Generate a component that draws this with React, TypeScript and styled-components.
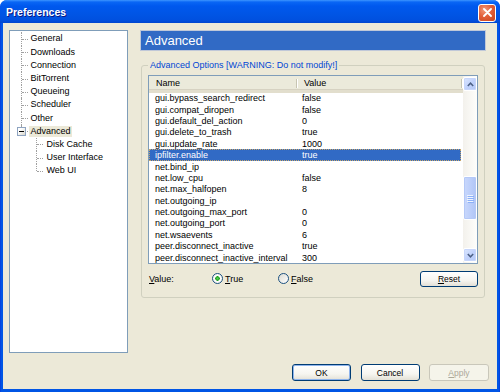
import React from 'react'
import styled, { createGlobalStyle } from 'styled-components'

const Global = createGlobalStyle`
    html, body {
        margin: 0;
        padding: 0;
        background: #fff;
    }
    body {
        font-family: "Liberation Sans", Arial, sans-serif;
        font-size: 9px;
    }
`

const treeItems = [
    { label: 'General', level: 0 },
    { label: 'Downloads', level: 0 },
    { label: 'Connection', level: 0 },
    { label: 'BitTorrent', level: 0 },
    { label: 'Queueing', level: 0 },
    { label: 'Scheduler', level: 0 },
    { label: 'Other', level: 0 },
    { label: 'Advanced', level: 0, open: true, selected: true, last: true },
    { label: 'Disk Cache', level: 1 },
    { label: 'User Interface', level: 1 },
    { label: 'Web UI', level: 1, last: true },
]

const settings = [
    ['gui.bypass_search_redirect', 'false'],
    ['gui.compat_diropen', 'false'],
    ['gui.default_del_action', '0'],
    ['gui.delete_to_trash', 'true'],
    ['gui.update_rate', '1000'],
    ['ipfilter.enable', 'true'],
    ['net.bind_ip', ''],
    ['net.low_cpu', 'false'],
    ['net.max_halfopen', '8'],
    ['net.outgoing_ip', ''],
    ['net.outgoing_max_port', '0'],
    ['net.outgoing_port', '0'],
    ['net.wsaevents', '6'],
    ['peer.disconnect_inactive', 'true'],
    ['peer.disconnect_inactive_interval', '300'],
]

const App = () => {
  return (
    <>
    <Global />
    <Window>
        <TitleBar>
            <Title>Preferences</Title>
            <CloseBtn>
                <svg width="9" height="9" viewBox="0 0 9 9">
                    <path d="M1 1 L8 8 M8 1 L1 8" stroke="#fff" strokeWidth="1.8" strokeLinecap="round" />
                </svg>
            </CloseBtn>
        </TitleBar>
        <Body>
            <Main>
                <Tree>
                    {treeItems.map((t) => (
                        <TreeRow key={t.label} $level={t.level} $last={!!t.last}>
                            {t.open && <Expander><Minus /></Expander>}
                            <TreeLabel $selected={!!t.selected}>{t.label}</TreeLabel>
                        </TreeRow>
                    ))}
                </Tree>
                <Right>
                    <PageHeader>Advanced</PageHeader>
                    <Group>
                        <Legend>Advanced Options [WARNING: Do not modify!]</Legend>
                        <List>
                            <ListBody>
                                <HeadRow>
                                    <HeadCell $w={148}>Name</HeadCell>
                                    <HeadCell $w={165}>Value</HeadCell>
                                </HeadRow>
                                {settings.map(([k, v]) => (
                                    <Row key={k} $selected={k === 'ipfilter.enable'}>
                                        <NameCell>{k}</NameCell>
                                        <ValueCell>{v}</ValueCell>
                                    </Row>
                                ))}
                            </ListBody>
                            <ScrollBar>
                                <ArrowBtn>
                                    <svg width="7" height="5" viewBox="0 0 7 5">
                                        <path d="M0.8 4 L3.5 1.2 L6.2 4" stroke="#4D6185" strokeWidth="1.5" fill="none" />
                                    </svg>
                                </ArrowBtn>
                                <Track>
                                    <Thumb>
                                        <Grip />
                                        <Grip />
                                        <Grip />
                                        <Grip />
                                    </Thumb>
                                </Track>
                                <ArrowBtn>
                                    <svg width="7" height="5" viewBox="0 0 7 5">
                                        <path d="M0.8 1 L3.5 3.8 L6.2 1" stroke="#4D6185" strokeWidth="1.5" fill="none" />
                                    </svg>
                                </ArrowBtn>
                            </ScrollBar>
                        </List>
                        <ValueBar>
                            <ValueLabel><u>V</u>alue:</ValueLabel>
                            <RadioOpt $w={66}><Radio $checked /><span><u>T</u>rue</span></RadioOpt>
                            <RadioOpt $w={60}><Radio /><span><u>F</u>alse</span></RadioOpt>
                            <Button $w={58} $h={16}><u>R</u>eset</Button>
                        </ValueBar>
                    </Group>
                </Right>
            </Main>
            <Footer>
                <Button $w={59} $h={17} $default>OK</Button>
                <Button $w={59} $h={17}>Cancel</Button>
                <Button $w={60} $h={17} $disabled><u>A</u>pply</Button>
            </Footer>
        </Body>
    </Window>
    </>
  )
}

export default App

const Window = styled.div`
    width: 500px;
    height: 392px;
    display: flex;
    flex-direction: column;
    background: linear-gradient(90deg, #0831D9 0, #0055E5 1px, #0055E5 499px, #0831D9 500px);
    border-radius: 7px 7px 0 0;
    overflow: hidden;
`
const TitleBar = styled.div`
    height: 23px;
    flex: none;
    display: flex;
    align-items: center;
    justify-content: space-between;
    padding: 0 4px 0 6px;
    background: linear-gradient(#3D95FF 0, #0A66F5 2px, #0058EE 6px, #0055E5 14px, #0050DF 20px, #0046CF 23px);
`
const Title = styled.div`
    color: #fff;
    font-weight: bold;
    font-size: 10.5px;
    text-shadow: 1px 1px 0 #0A1883;
    padding-top: 1px;
`
const CloseBtn = styled.div`
    width: 16px;
    height: 16px;
    border: 1px solid #fff;
    border-radius: 3px;
    display: flex;
    align-items: center;
    justify-content: center;
    background: radial-gradient(circle at 35% 30%, #F29A7A 0, #E2603A 45%, #C8431B 100%);
    box-sizing: content-box;
    margin-top: 2px;
`
const Body = styled.div`
    flex: 1;
    margin: 0 3px 3px;
    background: #ECE9D8;
    display: flex;
    flex-direction: column;
`
const Main = styled.div`
    display: flex;
    padding: 7px 11px 0 6px;
    gap: 12px;
    height: 323px;
`
const Tree = styled.div`
    width: 119px;
    height: 323px;
    box-sizing: border-box;
    border: 1px solid #7F9DB9;
    background: #fff;
    padding-top: 1.4px;
`
const TreeRow = styled.div<{ $level: number; $last: boolean }>`
    position: relative;
    height: 13.2px;
    display: flex;
    align-items: center;
    padding-left: ${(p) => (p.$level ? 35 : 19)}px;
    &::before {
        content: '';
        position: absolute;
        left: ${(p) => (p.$level ? 26 : 11)}px;
        top: 0;
        height: ${(p) => (p.$last ? '50%' : '100%')};
        border-left: 1px dotted #A0A0A0;
    }
    &::after {
        content: '';
        position: absolute;
        left: ${(p) => (p.$level ? 27 : 12)}px;
        width: 6px;
        top: 50%;
        border-top: 1px dotted #A0A0A0;
    }
`
const Expander = styled.span`
    position: absolute;
    z-index: 1;
    left: 7px;
    top: 2px;
    width: 9px;
    height: 9px;
    box-sizing: border-box;
    border: 1px solid #8EA4C1;
    background: linear-gradient(135deg, #fff 30%, #D8D5CA);
    display: flex;
    align-items: center;
    justify-content: center;
`
const Minus = styled.span`
    width: 5px;
    height: 1px;
    background: #000;
`
const TreeLabel = styled.span<{ $selected: boolean }>`
    padding: 0 1.5px;
    line-height: 11px;
    color: #000;
    background: ${(p) => (p.$selected ? '#ECE9D8' : 'transparent')};
`
const Right = styled.div`
    width: 346px;
    display: flex;
    flex-direction: column;
`
const PageHeader = styled.div`
    height: 21px;
    box-sizing: border-box;
    border: 1px solid #C0C8D8;
    background: #316AC5;
    color: #fff;
    font-size: 13px;
    padding-left: 4px;
    display: flex;
    align-items: center;
`
const Group = styled.fieldset`
    margin: 8.5px 1px 0 1px;
    padding: 4.5px 6px 10px 6px;
    border: 1px solid #D0D0BF;
    border-radius: 3px;
    min-width: 0;
`
const Legend = styled.legend`
    color: #0046D5;
    padding: 0 2px;
    line-height: 11px;
`
const List = styled.div`
    height: 189px;
    box-sizing: border-box;
    border: 1px solid #7F9DB9;
    background: #fff;
    display: flex;
    overflow: hidden;
`
const ListBody = styled.div`
    flex: 1;
    overflow: hidden;
`
const HeadRow = styled.div`
    height: 16.5px;
    box-sizing: border-box;
    display: flex;
    background: #EBEADB;
    border-bottom: 3px solid #E2DECD;
    box-shadow: inset 0 -1px 0 #D6D2C2;
`
const HeadCell = styled.div<{ $w: number }>`
    width: ${(p) => p.$w}px;
    box-sizing: border-box;
    padding-left: 7px;
    display: flex;
    align-items: center;
    position: relative;
    &::after {
        content: '';
        position: absolute;
        right: 0;
        top: 3px;
        bottom: 2px;
        width: 1px;
        background: #C7C5B2;
        box-shadow: 1px 0 0 #fff;
    }
`
const Row = styled.div<{ $selected: boolean }>`
    height: 11.4px;
    display: flex;
    align-items: center;
    margin-right: 2px;
    box-sizing: border-box;
    color: ${(p) => (p.$selected ? '#fff' : '#000')};
    background: ${(p) => (p.$selected ? '#316AC5' : 'transparent')};
    outline: ${(p) => (p.$selected ? '1px dotted #C7A66A' : 'none')};
    outline-offset: -1px;
`
const NameCell = styled.div`
    width: 148px;
    padding-left: 6px;
    box-sizing: border-box;
    white-space: nowrap;
    overflow: hidden;
`
const ValueCell = styled.div`
    padding-left: 5px;
`
const ScrollBar = styled.div`
    width: 14px;
    flex: none;
    display: flex;
    flex-direction: column;
    background: linear-gradient(90deg, #F3F1EC, #FEFEFB);
    padding: 1px 0;
    box-sizing: border-box;
`
const ArrowBtn = styled.div`
    height: 14px;
    flex: none;
    box-sizing: border-box;
    border: 1px solid #fff;
    border-radius: 2px;
    background: linear-gradient(135deg, #DCE7FE 0, #C2D3FC 50%, #B4C8F6 100%);
    box-shadow: inset 0 0 0 1px #C7D6FB;
    display: flex;
    align-items: center;
    justify-content: center;
`
const Track = styled.div`
    flex: 1;
    display: flex;
    flex-direction: column;
    padding-top: 85px;
`
const Thumb = styled.div`
    height: 44px;
    box-sizing: border-box;
    border: 1px solid #fff;
    border-radius: 2px;
    background: linear-gradient(90deg, #C9D8FC 0, #BACDFA 60%, #B0C5F5 100%);
    box-shadow: inset 0 0 0 1px #B5C9F7;
    display: flex;
    flex-direction: column;
    align-items: center;
    justify-content: center;
    gap: 1px;
`
const Grip = styled.div`
    width: 6px;
    height: 1px;
    background: #EEF4FE;
    box-shadow: 1px 1px 0 #8CB0F8;
`
const ValueBar = styled.div`
    display: flex;
    align-items: center;
    margin-top: 6.5px;
    padding-left: 1px;
    height: 16px;
`
const ValueLabel = styled.div`
    width: 63px;
`
const RadioOpt = styled.label<{ $w: number }>`
    width: ${(p) => p.$w}px;
    display: flex;
    align-items: center;
    gap: 2px;
`
const Radio = styled.span<{ $checked?: boolean }>`
    width: 11px;
    height: 11px;
    box-sizing: border-box;
    border-radius: 50%;
    border: 1px solid #1C5180;
    background: ${(p) =>
        p.$checked
            ? 'radial-gradient(circle, #55D455 0, #21A121 2px, #fff 2.5px, #EEEDE5 100%)'
            : 'linear-gradient(135deg, #DCDBD2, #fff)'};
`
const Button = styled.div<{ $w: number; $h: number; $default?: boolean; $disabled?: boolean }>`
    width: ${(p) => p.$w}px;
    height: ${(p) => p.$h}px;
    margin-left: auto;
    box-sizing: border-box;
    display: flex;
    align-items: center;
    justify-content: center;
    font-size: 8.5px;
    border-radius: 3px;
    border: 1px solid ${(p) => (p.$disabled ? '#C9C7BA' : '#003C74')};
    color: ${(p) => (p.$disabled ? '#ACA899' : '#000')};
    background: ${(p) =>
        p.$disabled ? '#F5F4EA' : 'linear-gradient(#FFFFFF 0, #F6F5F0 60%, #E3E0D6 100%)'};
    box-shadow: ${(p) => (p.$default ? 'inset 0 0 0 1px #8FB4EC' : 'none')};
`
const Footer = styled.div`
    display: flex;
    justify-content: flex-end;
    gap: 9.5px;
    padding: 0 8px 0 0;
    margin-top: 11px;
    & > div {
        margin-left: 0;
    }
`
